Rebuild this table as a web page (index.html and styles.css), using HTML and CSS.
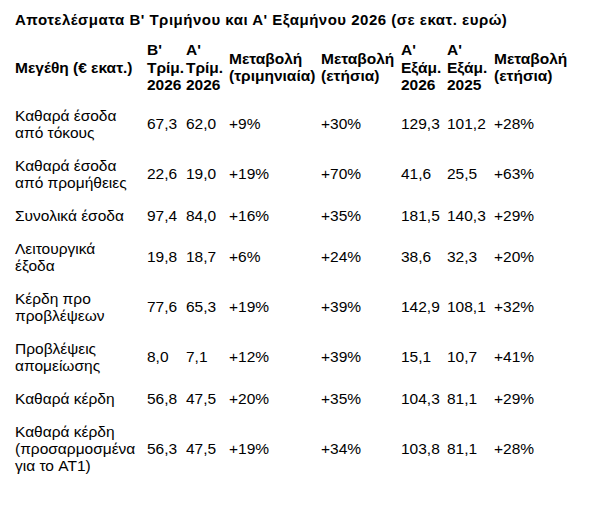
FILE: index.html
```html
<!DOCTYPE html>
<html lang="el">
<head>
<meta charset="utf-8">
<title>Αποτελέσματα</title>
<link rel="stylesheet" href="styles.css">
</head>
<body>
<div class="page">
  <h1 class="title">Αποτελέσματα Β' Τριμήνου και Α' Εξαμήνου 2026 (σε εκατ. ευρώ)</h1>
  <table class="results">
    <colgroup>
      <col class="c-name">
      <col class="c-q2">
      <col class="c-q1">
      <col class="c-chq">
      <col class="c-chy">
      <col class="c-h26">
      <col class="c-h25">
      <col class="c-chh">
    </colgroup>
    <thead>
      <tr>
        <th>Μεγέθη (€ εκατ.)</th>
        <th>Β'<br>Τρίμ.<br>2026</th>
        <th>Α'<br>Τρίμ.<br>2026</th>
        <th>Μεταβολή<br>(τριμηνιαία)</th>
        <th>Μεταβολή<br>(ετήσια)</th>
        <th>Α'<br>Εξάμ.<br>2026</th>
        <th>Α'<br>Εξάμ.<br>2025</th>
        <th>Μεταβολή<br>(ετήσια)</th>
      </tr>
    </thead>
    <tbody>
      <tr>
        <td>Καθαρά έσοδα<br>από τόκους</td>
        <td>67,3</td><td>62,0</td><td>+9%</td><td>+30%</td><td>129,3</td><td>101,2</td><td>+28%</td>
      </tr>
      <tr>
        <td>Καθαρά έσοδα<br>από προμήθειες</td>
        <td>22,6</td><td>19,0</td><td>+19%</td><td>+70%</td><td>41,6</td><td>25,5</td><td>+63%</td>
      </tr>
      <tr>
        <td>Συνολικά έσοδα</td>
        <td>97,4</td><td>84,0</td><td>+16%</td><td>+35%</td><td>181,5</td><td>140,3</td><td>+29%</td>
      </tr>
      <tr>
        <td>Λειτουργικά<br>έξοδα</td>
        <td>19,8</td><td>18,7</td><td>+6%</td><td>+24%</td><td>38,6</td><td>32,3</td><td>+20%</td>
      </tr>
      <tr>
        <td>Κέρδη προ<br>προβλέψεων</td>
        <td>77,6</td><td>65,3</td><td>+19%</td><td>+39%</td><td>142,9</td><td>108,1</td><td>+32%</td>
      </tr>
      <tr>
        <td>Προβλέψεις<br>απομείωσης</td>
        <td>8,0</td><td>7,1</td><td>+12%</td><td>+39%</td><td>15,1</td><td>10,7</td><td>+41%</td>
      </tr>
      <tr>
        <td>Καθαρά κέρδη</td>
        <td>56,8</td><td>47,5</td><td>+20%</td><td>+35%</td><td>104,3</td><td>81,1</td><td>+29%</td>
      </tr>
      <tr>
        <td>Καθαρά κέρδη<br>(προσαρμοσμένα<br>για το AT1)</td>
        <td>56,3</td><td>47,5</td><td>+19%</td><td>+34%</td><td>103,8</td><td>81,1</td><td>+28%</td>
      </tr>
    </tbody>
  </table>
</div>
</body>
</html>
```

FILE: styles.css
```css
html, body {
  margin: 0;
  padding: 0;
  background: #ffffff;
}

body {
  color: #000000;
  font-family: "Liberation Sans", Arial, sans-serif;
}

.page {
  padding: 11px 0 0 15px;
}

.title {
  margin: 0 0 4px 0;
  font-size: 15px;
  letter-spacing: 0.5px;
  line-height: 18px;
  font-weight: bold;
  white-space: nowrap;
}

.results {
  border-collapse: collapse;
  table-layout: fixed;
  width: 565px;
}

.c-name { width: 132px; }
.c-q2 { width: 39px; }
.c-q1 { width: 43px; }
.c-chq { width: 92px; }
.c-chy { width: 80px; }
.c-h26 { width: 46px; }
.c-h25 { width: 47px; }
.c-chh { width: 86px; }

.results th,
.results td {
  padding: 8px 0;
  text-align: left;
  vertical-align: middle;
  white-space: nowrap;
  line-height: 17px;
}

.results th {
  font-size: 15.5px;
  letter-spacing: 0;
  line-height: 17.5px;
  font-weight: bold;
  padding-bottom: 5px;
}

.results td {
  font-size: 15.5px;
}
```
